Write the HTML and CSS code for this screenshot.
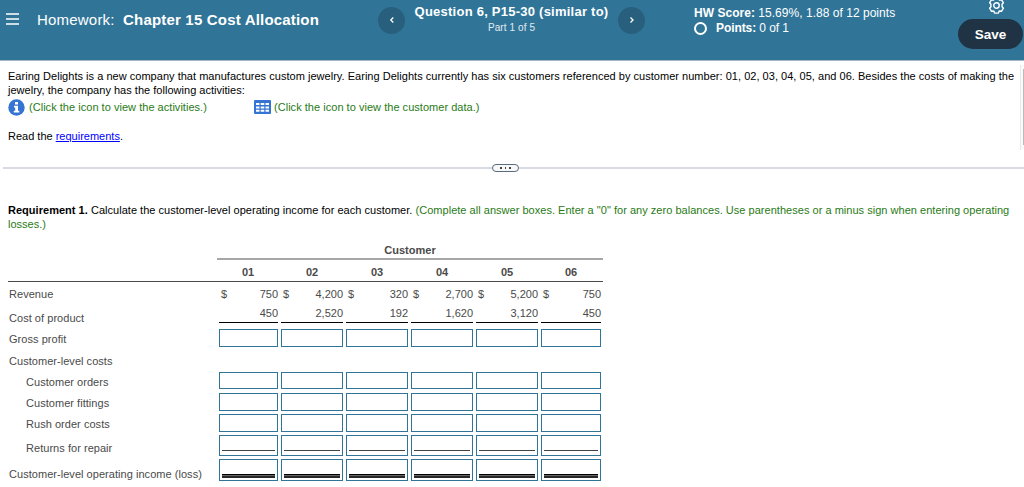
FILE: index.html
```html
<!DOCTYPE html>
<html lang="en">
<head>
<meta charset="utf-8">
<title>Homework: Chapter 15 Cost Allocation</title>
<link rel="stylesheet" href="styles.css">
</head>
<body>
<header class="header">
  <div class="title">
    <svg class="menu" width="13" height="12" viewBox="0 0 13 12"><path d="M0 1h13M0 6h13M0 11h13" stroke="#fff" stroke-width="1.4"/></svg>
    <span class="homework">Homework:</span><strong class="chapter">Chapter 15 Cost Allocation</strong>
  </div>
  <nav class="question">
    <button class="round" aria-label="Previous"><svg width="6" height="8" viewBox="0 0 6 8"><path d="M4.3 1.5L1.8 4l2.5 2.5" fill="none" stroke="#fff" stroke-width="1.3"/></svg></button>
    <div class="qtext"><strong class="qname">Question 6, P15-30 (similar to)</strong><span class="part">Part 1 of 5</span></div>
    <button class="round" aria-label="Next"><svg width="6" height="8" viewBox="0 0 6 8"><path d="M1.5 1.5L4 4 1.5 6.5" fill="none" stroke="#fff" stroke-width="1.3"/></svg></button>
  </nav>
  <div class="scores">
    <div class="hwscore"><b>HW Score:</b> 15.69%, 1.88 of 12 points</div>
    <div class="points"><i class="ring"></i><span><b>Points:</b> 0 of 1</span></div>
  </div>
  <div class="actions">
    <svg class="gear" width="19" height="19" viewBox="0 0 16 16" fill="none" stroke="#fff" stroke-width="1.2" stroke-linejoin="round"><path d="M6.4 1.6h3.2l.7 1.8 1.9-.3 1.6 2.6L12.7 7v2l1.1 1.3-1.6 2.6-1.9-.3-.7 1.8H6.4l-.7-1.8-1.9.3-1.6-2.6L3.3 9V7L2.2 5.7l1.6-2.6 1.9.3z"/><circle cx="8" cy="8" r="2.3"/></svg>
    <button class="save">Save</button>
  </div>
</header>
<section class="problem">
  <div class="problem-text">
    <p class="line l1">Earing Delights is a new company that manufactures custom jewelry. Earing Delights currently has six customers referenced by customer number: 01, 02, 03, 04, 05, and 06. Besides the costs of making the</p>
    <p class="line l2">jewelry, the company has the following activities:</p>
    <div class="links">
      <a class="link first"><svg width="17" height="17" viewBox="0 0 17 17"><circle cx="8.5" cy="8.5" r="8.2" fill="#3574d2"/><path d="M7 3h3v2.4H7zM6 6.8h4v5h1.3v1.7H5.8v-1.7h1.4V8.4H6z" fill="#fff"/></svg><span class="g1">(Click the icon to view the activities.)</span></a>
      <a class="link second"><svg width="17" height="14" viewBox="0 0 17 14"><rect width="17" height="14" rx="1" fill="#3574d2"/><path d="M2 3h3.5v2H2zM6.7 3h3.6v2H6.7zM11.5 3H15v2h-3.5zM2 6.4h3.5v2H2zM6.7 6.4h3.6v2H6.7zM11.5 6.4H15v2h-3.5zM2 9.8h3.5v2H2zM6.7 9.8h3.6v2H6.7zM11.5 9.8H15v2h-3.5z" fill="#fff"/></svg><span class="g2">(Click the icon to view the customer data.)</span></a>
    </div>
    <p class="read">Read the <a class="req">requirements</a>.</p>
  </div>
  <div class="scroll"><div class="thumb"></div></div>
</section>
<div class="divider"><i></i><span class="handle"><b></b><b></b><b></b></span><i></i></div>
<main class="work">
  <p class="line r1"><b>Requirement 1.</b> Calculate the customer-level operating income for each customer. <span class="green">(Complete all answer boxes. Enter a "0" for any zero balances. Use parentheses or a minus sign when entering operating</span></p>
  <p class="line green r2">losses.)</p>
  <div class="sheet">
    <div class="customer">Customer</div>
    <div class="row heads"><span></span><b>01</b><b>02</b><b>03</b><b>04</b><b>05</b><b>06</b></div>
    <div class="row revenue"><span>Revenue</span><div><i>$</i>750</div><div><i>$</i>4,200</div><div><i>$</i>320</div><div><i>$</i>2,700</div><div><i>$</i>5,200</div><div><i>$</i>750</div></div>
    <div class="row cost"><span>Cost of product</span><div>450</div><div>2,520</div><div>192</div><div>1,620</div><div>3,120</div><div>450</div></div>
    <div class="row gross"><span>Gross profit</span><input><input><input><input><input><input></div>
    <div class="row group"><span>Customer-level costs</span></div>
    <div class="row item orders"><span>Customer orders</span><input><input><input><input><input><input></div>
    <div class="row item fit"><span>Customer fittings</span><input><input><input><input><input><input></div>
    <div class="row item rush"><span>Rush order costs</span><input><input><input><input><input><input></div>
    <div class="row item returns"><span>Returns for repair</span><label class="box"><hr></label><label class="box"><hr></label><label class="box"><hr></label><label class="box"><hr></label><label class="box"><hr></label><label class="box"><hr></label></div>
    <div class="row income"><span>Customer-level operating income (loss)</span><label class="box"><hr></label><label class="box"><hr></label><label class="box"><hr></label><label class="box"><hr></label><label class="box"><hr></label><label class="box"><hr></label></div>
  </div>
</main>
</body>
</html>
```
FILE: styles.css
```css
* { box-sizing: border-box; }
body { margin: 0; width: 1024px; height: 487px; overflow: hidden; background: #fff; color: #000; font: 11px/14px "Liberation Sans", Arial, sans-serif; }
p { margin: 0; }
button { border: 0; padding: 0; font-family: inherit; color: #fff; }
.header { height: 61px; background: #307598; border-bottom: 1px solid #a3b9c7; color: #fff; display: grid; grid-template-columns: 378px 316px 264px 66px; overflow: hidden; white-space: nowrap; }
.title { display: flex; align-items: flex-start; padding: 11px 0 0 6px; line-height: 18px; }
.menu { margin: 2px 18px 0 0; }
.homework { font-size: 15px; width: 86px; letter-spacing: .2px; }
.chapter { font-size: 15px; letter-spacing: .19px; }
.question { display: flex; justify-content: flex-start; align-items: flex-start; }
.round { width: 27px; height: 27px; border-radius: 50%; background: #285f7d; margin-top: 6.5px; display: flex; align-items: center; justify-content: center; flex: none; }
.qtext { width: 213px; display: flex; flex-direction: column; align-items: center; padding-top: 4px; }
.qname { font-size: 13px; line-height: 16px; letter-spacing: .24px; }
.part { font-size: 10px; line-height: 15px; color: #e0ebf0; letter-spacing: .1px; }
.scores { font-size: 12px; padding-top: 5px; line-height: 16px; letter-spacing: .03px; }
.points { display: flex; align-items: center; gap: 9px; line-height: 15px; letter-spacing: -.08px; }
.ring { width: 13px; height: 13px; border: 2px solid #fff; border-radius: 50%; }
.actions { display: flex; flex-direction: column; }
.gear { margin: -4px 0 0 29px; }
.save { margin-top: 4px; width: 65px; height: 30px; border-radius: 15px; background: #203344; font-size: 13.5px; font-weight: bold; }
.problem { height: 106px; display: flex; justify-content: space-between; white-space: nowrap; }
.problem-text { padding: 8px 0 0 8px; width: 1012px; }
.l1 { letter-spacing: .027px; }
.l2 { letter-spacing: .02px; }
.r1 { letter-spacing: .027px; }
.links { display: flex; height: 18px; align-items: center; margin-top: 1px; color: #287a16; }
.link { display: flex; align-items: center; gap: 4px; }
.second { gap: 3px; }
.first { width: 246px; }
.g1, .g2 { letter-spacing: .03px; }
.read { margin-top: 13px; }
.req { color: #00f; text-decoration: underline; }
.scroll { width: 4px; height: 85px; margin-top: 4px; border-left: 1px solid #e8e8e8; background: #fafafa; display: flex; justify-content: flex-end; }
.thumb { width: 1px; height: 76px; margin-top: 4px; background: #bbb; }
.divider { display: flex; align-items: center; height: 2px; padding-left: 3px; }
.divider i { height: 2px; background: #dadae2; width: 489px; }
.divider i:last-child { flex: 1; }
.handle { width: 27px; height: 8px; border: 1px solid #5c6b7c; border-radius: 4px; background: #f8f8fb; display: flex; align-items: center; justify-content: center; gap: 3px; flex: none; }
.handle b { width: 1.5px; height: 2px; background: #444; }
.work { padding: 34px 0 0 8px; white-space: nowrap; }
.green { color: #287a16; }
.sheet { width: 595px; color: #4a4a4a; margin-top: 11px; }
.customer { margin-left: 209px; height: 18px; border-bottom: 2px solid #a6a6a6; font-weight: bold; text-align: center; line-height: 17px; }
.row { display: grid; grid-template-columns: 206px 60px 62px 62px 62px 62px 60px; column-gap: 3px; padding-left: 1px; align-items: start; }
.row > span { letter-spacing: .04px; }
.heads { height: 22px; border-bottom: 1px solid #4a4a4a; text-align: center; line-height: 24px; }
.revenue { height: 24px; line-height: 24px; }
.revenue div { display: flex; justify-content: space-between; padding-left: 2px; }
.revenue i { font-style: normal; }
.cost { height: 23px; line-height: 24px; }
.cost div { text-align: right; line-height: 14px; height: 17px; border-bottom: 1px solid #000; }
.gross { height: 21px; line-height: 21px; }
.group { height: 22px; line-height: 22px; }
.item span { padding-left: 17px; }
.orders, .fit, .rush { height: 21px; line-height: 21px; }
input, .box { width: 100%; min-width: 0; border: 1px solid #307598; background: #fff; padding: 0; height: 18px; display: flex; }
.row > :nth-child(2):is(input, label, div) { width: 59px; margin-left: 1px; }
.orders input { height: 17px; }
.returns { height: 24px; line-height: 26px; }
.returns .box { height: 21px; align-items: flex-end; padding: 0 2px 4px; }
.income { line-height: 30px; }
.income .box { height: 22px; align-items: flex-end; padding: 0 2px 2px; }
hr { margin: 0; border: 0; width: 100%; height: 1px; background: #444; }
.income hr { height: 4px; background: linear-gradient(#000 0 1px, #666 1px 2px, #292929 2px); }
```
